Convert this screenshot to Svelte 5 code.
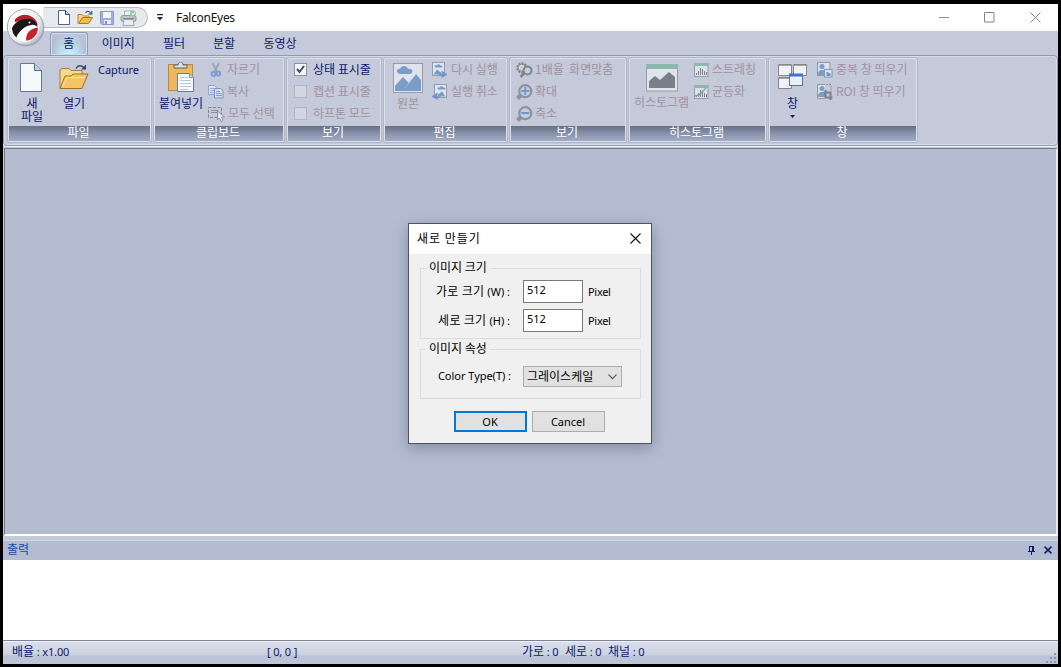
<script>
  const tabs = [
    { t: '홈', w: 37.5, on: true },
    { t: '이미지', w: 61.5 },
    { t: '필터', w: 50 },
    { t: '분할', w: 50 },
    { t: '동영상', w: 62 }
  ];
</script>

{#snippet small(kind)}
  {#if kind === 'cut'}
    <svg width="16" height="16" viewBox="0 0 16 16" fill="none"><path d="M4.500 1l4.500 9M11 1L6.500 10" stroke="#9aa3b2" stroke-width="1.800"/><circle cx="5.500" cy="12" r="2" stroke="#7e9bd0" stroke-width="1.800"/><circle cx="10.300" cy="11.500" r="2" stroke="#7e9bd0" stroke-width="1.800"/></svg>
  {:else if kind === 'copy'}
    <svg width="16" height="16" viewBox="0 0 16 16"><path d="M.500 1.500h6l2 2v7h-8z" fill="#dce4f2" stroke="#8fa3c6"/><path d="M2 4.500h4M2 6.500h4M2 8.500h4" stroke="#8eabd8"/><path d="M6.500 4.500h6l2.500 2v7.500H6.500z" fill="#d3def0" stroke="#7f95bd"/><path d="M8 7.500h4M8 9.500h6M8 11.500h6" stroke="#7e9fd4"/></svg>
  {:else if kind === 'all'}
    <svg width="17" height="16" viewBox="0 0 17 16"><path d="M.5 1.500h13v10H.5z" fill="none" stroke="#7d8492" stroke-dasharray="3 1.500"/><path d="M3 4.500h7M3 6.500h6" stroke="#8b93a1"/><path d="M9.500 5v9l2-2 1.500 3.500 2-1-1.300-3.500h2.800z" fill="#e5eaf2" stroke="#8a92a2"/></svg>
  {:else if kind === 'redo'}
    <svg width="17" height="16" viewBox="0 0 17 16"><rect x="1.500" y=".5" width="12" height="13" fill="#dfe4ee" stroke="#979da8"/><path d="M4 5.500c-1-2 0-2.500 2-2 1-2 3-1 3 0 3 0 3 2 1 2z" fill="#779bc7"/><path d="M2.500 12.500l3.500-5 4 3v2z" fill="#779bc7"/><path d="M7 11.500c1 1 2 1 3.500.5V8.500l6 4-6 3.500v-2c-2 .5-3-.5-3.500-2.500z" fill="#6f95c4"/></svg>
  {:else if kind === 'undo'}
    <svg width="17" height="16" viewBox="0 0 17 16"><rect x="3.500" y=".5" width="12" height="13" fill="#dfe4ee" stroke="#979da8"/><path d="M7 5.500c-1-2 0-2.500 2-2 1-2 3-1 3 0 3 0 3 2 1 2z" fill="#779bc7"/><path d="M14.500 12.500l-3.500-5-4 3v2z" fill="#779bc7"/><path d="M10 11.500c-1 1-2 1-3.500.5V8.500l-6 4 6 3.500v-2c2 .5 3-.5 3.500-2.500z" fill="#6f95c4"/></svg>
  {:else if kind === 'one'}
    <svg width="17" height="16" viewBox="0 0 17 16" fill="none"><circle cx="6" cy="6" r="4.700" stroke="#7f838c" stroke-width="2" stroke-dasharray="2 1"/><circle cx="5.700" cy="5.700" r="3.500" fill="#dce1eb" stroke="#7f838c"/><path d="M4 4h3v4H4z" fill="#e3cba4"/><circle cx="11.500" cy="8.500" r="4" fill="#c5ccda" stroke="#7f838c" stroke-width="2"/><path d="M8 11.500L4.500 15" stroke="#7f838c" stroke-width="2.500"/></svg>
  {:else if kind === 'in' || kind === 'out'}
    <svg width="17" height="16" viewBox="0 0 17 16"><path d="M6 10l-4.500 4.500" stroke="#8e929b" stroke-width="4"/><circle cx="9.300" cy="7.200" r="6" fill="#c3cddf" stroke="#8e929b" stroke-width="2.200"/><path d="M5.300 7h8" stroke="#7399c8" stroke-width="2"/>{#if kind === 'in'}<path d="M9.300 3v8" stroke="#7399c8" stroke-width="2"/>{/if}</svg>
  {:else if kind === 'st' || kind === 'eq'}
    <svg width="16" height="16" viewBox="0 0 16 16"><rect x="1.500" y="1.500" width="13.500" height="13" fill="#dce1ea" stroke="#979ca8"/><path d="M1 1h14.500v3H1z" fill="#8bb8ae"/><path d="M3.500 13v-2M5.500 13V9M7.500 13V6M9.500 13V7M11.500 13V9M13.500 13v-3" stroke="#7d818c"/>{#if kind === 'eq'}<path d="M2 12l4-1 7-7" stroke="#75aaa0" fill="none" stroke-width="1.400"/>{/if}</svg>
  {:else if kind === 'dup' || kind === 'roi'}
    <svg width="17" height="16" viewBox="0 0 17 16"><path d={kind === 'dup' ? 'M1.500 .5h12.500v13H1.500z' : 'M9 .5H1.500v14h7'} fill="#dce2ed" stroke="#9297a2"/><circle cx="6" cy="4.500" r="2.500" fill="#799dca"/><path d="M2 13c0-3 1-5 4-5s4 2 4 5z" fill="#799dca"/>{#if kind === 'dup'}<rect x="8.500" y="7.500" width="7.500" height="7.500" fill="#d9e3f1" stroke="#8496b1"/><path d="M10.500 10h2v1h2v3h-4z" fill="#759ac8"/>{:else}<path d="M10 .5h5v6" fill="none" stroke="#8c909a" stroke-dasharray="2 1"/><path d="M9.500 6v7.500h7M7.500 8.500h7V16" fill="none" stroke="#7b7f87" stroke-width="2"/>{/if}</svg>
  {/if}
{/snippet}

{#snippet item(kind, text)}
  <div class="item off">{@render small(kind)}<span>{text}</span></div>
{/snippet}

{#snippet check(text, on)}
  <div class="item" class:off={!on}><i class="box" class:on>{#if on}<svg width="9" height="9" viewBox="0 0 9 9"><path d="M1 4l2.500 3L8 1" fill="none" stroke="#3d4c68" stroke-width="2"/></svg>{/if}</i><span>{text}</span></div>
{/snippet}

<div class="desk">
  <div class="app">
    <header class="title">
      <div class="quick">
        <svg class="q1" width="12" height="15" viewBox="0 0 12 15"><path d="M.5.500h7l4 4v10H.5z" fill="#fbfdff" stroke="#52627f"/><path d="M7.500.500v4h4" fill="#c2d2e8" stroke="#31466d"/></svg>
        <svg class="q2" width="17" height="15" viewBox="0 0 17 15"><path d="M1 13.500v-9h4l1.500 1.500H12v3" fill="#f9d985" stroke="#b58325"/><path d="M1.500 13.500l4-6h10l-4 6z" fill="#f5bc46" stroke="#aa7620"/><path d="M8.500 3c1-2.500 4.500-2 5.500.5M14.800 1v3.200h-3.300" fill="none" stroke="#49658c" stroke-width="1.200"/></svg>
        <svg class="q3" width="14" height="14" viewBox="0 0 14 14"><path d="M.5.5h13v13H2l-1.500-1.500z" fill="#a3aee0" stroke="#8994cb"/><path d="M3 1h8v6H3z" fill="#f3f5fb"/><path d="M4 9h7v4H4z" fill="#e6eaf5"/><path d="M5 10h2v3H5z" fill="#858fbe"/></svg>
        <svg class="q4" width="17" height="16" viewBox="0 0 17 16"><path d="M4.500 6V1h8v5" fill="#eef2f6" stroke="#a8b0b9"/><rect x="1" y="5.500" width="15" height="6" rx="2" fill="#bfc5cc" stroke="#9299a3"/><path d="M3 8.500h11" stroke="#7d858f"/><path d="M4 9.500h9l1 6H3z" fill="#e7edf2" stroke="#9fa6af"/><circle cx="13" cy="3.500" r="3" fill="#9ac89d"/><path d="M11.500 3l1.500 2 2-3" fill="none" stroke="#fff"/></svg>
      </div>
      <svg class="qmore" width="6" height="7" viewBox="0 0 6 7"><path d="M0 0h6v1.300H0zM0 3h6L3 6.500z" fill="#15256f"/></svg>
      <span class="name">FalconEyes</span>
      <div class="win">
        <svg width="10" height="11" viewBox="0 0 10 11"><path d="M0 5.500h10" stroke="#8b8b8b"/></svg>
        <svg width="11" height="11" viewBox="0 0 11 11"><path d="M.5.500h9.500v9.500H.5z" fill="none" stroke="#858585"/></svg>
        <svg width="11" height="11" viewBox="0 0 11 11"><path d="M.5.500l10 10M10.500.500l-10 10" stroke="#858585"/></svg>
      </div>
    </header>
    <nav class="tabs">
      {#each tabs as tab}
        <div class="tab" class:on={tab.on} style="width:{tab.w}px">{tab.t}</div>
      {/each}
    </nav>
    <svg class="logo" width="42" height="42" viewBox="0 0 42 42">
      <defs><linearGradient id="ring" x2="1" y2="1"><stop stop-color="#fff"/><stop offset=".6" stop-color="#e8eaf0"/><stop offset="1" stop-color="#a8adba"/></linearGradient><clipPath id="disc"><circle cx="19" cy="20.800" r="13"/></clipPath></defs>
      <circle cx="20" cy="21" r="18.500" fill="#888e9f" opacity=".6"/><circle cx="19.300" cy="20" r="18" fill="url(#ring)" stroke="#a4a9b5"/><circle cx="19" cy="20.800" r="14" fill="#fff"/>
      <g clip-path="url(#disc)"><path d="M7 7h26v13l-4-5-10-2-10 2z" fill="#b71f2b"/><path d="M3 30C5 18 12 12 20 12c6 0 11 1 11.500 8-2-2-4-2.500-6-2C18 19 13 24 10 34z" fill="#1b1719"/><path d="M9 35c1-8 7-14 15-15.500l4-.5 2 2-8 15z" fill="#fff"/><path d="M20.500 35c-2-8 4-14.500 13-14.500l3 7-8 9z" fill="#c3242f"/></g><circle cx="23.500" cy="15.500" r="1.100" fill="#dde4e8"/>
    </svg>

    <div class="ribbon">
      <section style="width:143px">
        <div class="body">
          <div class="big new">
            <svg width="22" height="29" viewBox="0 0 22 29"><path d="M.5.500h14l7 7v21H.5z" fill="#f6f9fc" stroke="#65788e"/><path d="M14.500.500v7h7" fill="#bdd0e5" stroke="#54708f"/></svg>
            <span>새</span><span class="second">파일</span>
          </div>
          <div class="big open">
            <svg width="31" height="26" viewBox="0 0 31 26"><path d="M1 24V6l2-1.500h7l2 2h11v4" fill="#f8d88b" stroke="#a67d40"/><path d="M1 24.500L6 12h6l2-2h15l-6 14.500z" fill="#f4c565" stroke="#9c6e2d"/><path d="M4 22l4-8.500h18" stroke="#fae4ae" fill="none"/><path d="M17 4.500c2-3.500 6-3.500 8-.5" fill="none" stroke="#38475d" stroke-width="1.500"/><path d="M22 5.500h5v-5z" fill="#38475d"/></svg>
            <span>열기</span>
          </div>
          <span class="capture">Capture</span>
        </div>
        <footer>파일</footer>
      </section>

      <section style="width:130px">
        <div class="body">
          <div class="big paste">
            <svg width="27" height="31" viewBox="0 0 27 31"><rect x=".5" y="2.500" width="24" height="26" fill="#eeb85d" stroke="#b78a43"/><path d="M6 6V3h4c0-4 5-4 5 0h4v3z" fill="#dce3ed" stroke="#596372"/><path d="M9.500 11.500h12l4 4v14h-16z" fill="#f6f9fd" stroke="#667a96"/><path d="M21.500 11.500v4h4" fill="#cadbed" stroke="#7590b4"/><path d="M12 15.500h8M12 18.500h11M12 21.500h11M12 24.500h11M12 27.500h8" stroke="#b9c8da"/></svg>
            <span>붙여넣기</span>
          </div>
          <div class="list" style="margin-left:5px">{@render item('cut', '자르기')}{@render item('copy', '복사')}{@render item('all', '모두 선택')}</div>
        </div>
        <footer>클립보드</footer>
      </section>

      <section style="width:94px">
        <div class="body"><div class="list checks">{@render check('상태 표시줄', true)}{@render check('캡션 표시줄', false)}{@render check('하프톤 모드', false)}</div></div>
        <footer>보기</footer>
      </section>

      <section style="width:123px">
        <div class="body">
          <div class="big off orig">
            <svg width="30" height="30" viewBox="0 0 30 30"><rect x=".5" y=".5" width="29" height="29" fill="#dfe3eb" stroke="#969aa3"/><path d="M7 11c-5-1-3-6 0-5 1-4 7-4 8 0 5-1 6 4 2 5z" fill="#799dc7"/><path d="M2 28v-5l8-9 6 6 7-9 5 6v11z" fill="#799dc7"/><path d="M12 25l5-6" stroke="#a3bcda"/></svg>
            <span>원본</span>
          </div>
          <div class="list" style="margin-left:8px">{@render item('redo', '다시 실행')}{@render item('undo', '실행 취소')}</div>
        </div>
        <footer>편집</footer>
      </section>

      <section style="width:116px">
        <div class="body"><div class="list zoomlist">{@render item('one', '1배율  화면맞춤')}{@render item('in', '확대')}{@render item('out', '축소')}</div></div>
        <footer>보기</footer>
      </section>

      <section style="width:137px">
        <div class="body">
          <div class="big off hist">
            <svg width="32" height="28" viewBox="0 0 32 28"><rect x=".5" y=".5" width="31" height="26.500" fill="#dfe3ea" stroke="#969aa4"/><path d="M0 0h32v5H0z" fill="#8bb8ad"/><path d="M3 24v-7l6-5 5 4 9-8 6 5v11z" fill="#7a7f89"/></svg>
            <span>히스토그램</span>
          </div>
          <div class="list" style="margin-left:4px">{@render item('st', '스트레칭')}{@render item('eq', '균등화')}</div>
        </div>
        <footer>히스토그램</footer>
      </section>

      <section style="width:148px">
        <div class="body">
          <div class="big wins">
            <svg width="31" height="27" viewBox="0 0 31 27"><g fill="#f2f2f3" stroke="#85878c"><path d="M1.500.500h13v11h-13zM16.500.500h13v11h-13zM1.500 13.500h13v11h-13z"/></g><path d="M2 1.500h12M17 1.500h12M2 14.500h12" stroke="#a5a7ab"/><rect x="12.500" y="10.500" width="13" height="11" fill="#e7f1f6" stroke="#52779b"/><path d="M12 11h14" stroke="#3b74d2" stroke-width="3"/></svg>
            <span>창</span>
            <svg class="drop" width="5" height="3" viewBox="0 0 5 3"><path d="M0 0h5L2.500 3z" fill="#09176c"/></svg>
          </div>
          <div class="list" style="margin-left:8px">{@render item('dup', '중복 창 띄우기')}{@render item('roi', 'ROI 창 띄우기')}</div>
        </div>
        <footer>창</footer>
      </section>
    </div>

    <main class="mdi">
      <div class="dialog">
        <header><span>새로 만들기</span><svg width="11" height="11" viewBox="0 0 11 11"><path d="M.5.500l10 10M10.500.500l-10 10" stroke="#111" stroke-width="1.100"/></svg></header>
        <div class="content">
          <fieldset class="size">
            <legend>이미지 크기</legend>
            <div class="field"><label for="w">가로 크기 <em>(W) :</em></label><input id="w" value="512" /><span class="lat">Pixel</span></div>
            <div class="field"><label for="h">세로 크기 <em>(H) :</em></label><input id="h" value="512" /><span class="lat">Pixel</span></div>
          </fieldset>
          <fieldset class="attr">
            <legend>이미지 속성</legend>
            <div class="field"><span class="ctype">Color Type(T) :</span><div class="select"><span>그레이스케일</span><svg width="9" height="6" viewBox="0 0 9 6"><path d="M.5.700l4 4 4-4" fill="none" stroke="#555" stroke-width="1.200"/></svg></div></div>
          </fieldset>
          <div class="buttons"><button class="ok">OK</button><button>Cancel</button></div>
        </div>
      </div>
    </main>

    <div class="outhead"><span>출력</span>
      <svg class="pin" width="7" height="9" viewBox="0 0 7 9"><path d="M1 .5h5M1.500 0v6M4.500 0v6M5.500 0v6M0 5.500h7M3.500 6v3" stroke="#09176c"/></svg>
      <svg width="8" height="8" viewBox="0 0 8 8"><path d="M.5.700l7 6.600M7.500.700l-7 6.600" stroke="#09176c" stroke-width="1.600"/></svg>
    </div>
    <div class="output"></div>
    <div class="status">
      <span>배율 <em>: x1.00</em></span><span><em>[ 0, 0 ]</em></span><span>가로 <em>: 0</em></span><span>세로 <em>: 0</em></span><span>채널 <em>: 0</em></span>
      <svg class="grip" width="12" height="12" viewBox="0 0 12 12"><path d="M8 1h2v2H8zM4 5h2v2H4zM8 5h2v2H8zM0 9h2v2H0zM4 9h2v2H4zM8 9h2v2H8z" fill="#8b96b4"/></svg>
    </div>
  </div>
</div>

<style>
  :global(body) { background: #000; overflow: hidden; }
  .desk { width: 1061px; height: 667px; box-sizing: border-box; padding: 4px 3px 3px; background: #000; font: 12px/14px "Noto Sans CJK KR", sans-serif; color: #09176c; }
  .app { position: relative; height: 660px; display: flex; flex-direction: column; background: #c4cad9; }
  svg { display: block; flex: none; }
  em { font: 11px "Noto Sans", sans-serif; letter-spacing: -.15px; }
  .title { height: 27px; background: #fff; display: flex; align-items: center; flex: none; }
  .quick { box-sizing: border-box; margin: 0 0 0 40px; width: 105px; height: 21px; border: 1px solid #b5bac3; border-left-color: transparent; border-radius: 2px 11px 11px 2px; background: #e6eaef; display: flex; align-items: center; padding-left: 14px; }
  .q2 { margin-left: 7px; } .q3 { margin-left: 6px; } .q4 { margin-left: 6px; }
  .qmore { margin: 0 0 0 9px; }
  .name { margin-left: 13px; color: #111; font: 12px/27px "Noto Sans", sans-serif; letter-spacing: -.3px; }
  .win { margin-left: auto; display: flex; gap: 35px; padding-right: 17px; }
  .logo { position: absolute; left: 3px; top: 3px; }
  .tabs { height: 24px; flex: none; display: flex; padding: 1px 0 0 47px; box-sizing: border-box; }
  .tab { box-sizing: border-box; height: 23px; text-align: center; line-height: 21px; }
  .tab.on { border: 1px solid #8c9cb9; border-bottom: 0; border-radius: 3px 3px 0 0; background: radial-gradient(ellipse at 50% 110%, #c7fbff 0, #b9d6e8 45%, transparent 75%), linear-gradient(#bcc4d6, #a9b5cb); box-shadow: inset 0 0 0 1px #d4dceb; line-height: 20px; }
  .ribbon { height: 91px; flex: none; box-sizing: border-box; border: 1px solid #8e9baf; border-radius: 4px; box-shadow: inset 0 0 0 1px #d5dbe6, 0 1px #eef1f5; display: flex; gap: 3px; padding: 2px 4px; }
  section { box-sizing: border-box; height: 84px; flex: none; border: 1px solid #dbe0eb; border-radius: 2px; box-shadow: 0 0 0 1px #afb7c9; display: flex; flex-direction: column; }
  .body { height: 67px; flex: none; display: flex; padding-top: 1px; box-sizing: border-box; }
  footer { height: 15px; line-height: 12px; text-align: center; color: #fff; background: linear-gradient(#687086, #858fa8 45%, #a2acc7); padding-right: 2px; }
  .off { color: #a2919f; }
  .big { display: flex; flex-direction: column; align-items: center; text-align: center; line-height: 13px; flex: none; white-space: nowrap; }
  .big span { margin-top: 4px; }
  .new { width: 22px; padding: 3px 0 0 11px; } .new span { padding-left: 2px; } .big .second { margin-top: 0; }
  .open { width: 32px; margin-left: 16px; padding-top: 4px; } .big.open span { margin-top: 6px; }
  .capture { margin: 2px 0 0 8px; font: 11px/15px "Noto Sans", sans-serif; letter-spacing: -.05px; }
  .paste { width: 44px; margin-left: 4px; padding-top: 2px; } .big.paste span { margin-top: 3px; }
  .orig { width: 30px; margin-left: 8px; padding-top: 3px; } .big.orig span { margin-top: 3px; }
  .hist { width: 55px; margin-left: 4px; padding-top: 4px; } .big.hist span { margin-top: 3px; }
  .wins { width: 31px; margin-left: 7px; padding-top: 4px; } .big.wins span { margin-top: 5px; } .drop { margin-top: 6px; }
  .list { padding-top: 1px; }
  .item { height: 22px; display: flex; gap: 3px; white-space: pre; align-items: flex-start; line-height: 17px; padding-top: 1px; box-sizing: border-box; }
  .item span { margin-top: -2px; }
  .checks { padding-left: 6px; } .checks .item { gap: 6px; }
  .box { box-sizing: border-box; width: 13px; height: 13px; margin-top: 1px; border: 1px solid #adb5c4; background: #d1d6e1; padding: 1px; }
  .box.on { border-color: #8595b0; background: #f4f6fa; }
  .zoomlist { padding-left: 5px; } .zoomlist .item { gap: 2px; }
  .mdi { height: 388px; box-sizing: border-box; flex: none; border-style: solid; border-width: 1px 2px 2px 1px; border-color: #777a82 #e6e9ef #fff #777a82; background: #b4bcd2; padding: 74px 0 0 403px; margin: 2px 0 0 1px; }
  .dialog { width: 244px; height: 221px; box-sizing: border-box; border: 1px solid #51535d; background: #f0f0f0; color: #000; box-shadow: 0 4px 14px #39415a66; }
  .dialog header { background: #fff; height: 30px; box-sizing: border-box; display: flex; align-items: center; padding: 0 10px 2px 8px; justify-content: space-between; letter-spacing: 1px; }
  .content { padding: 14px 10px 0 11px; }
  fieldset { position: relative; box-sizing: border-box; border: 1px solid #dcdcdc; margin: 0; padding: 11px 0 0; width: 221px; }
  legend { position: absolute; left: 5px; top: -9px; padding: 0 3px; background: #f0f0f0; }
  .size { height: 71px; } .attr { height: 50px; margin-top: 10px; padding-top: 16px; }
  .field { display: flex; height: 24px; } .field + .field { margin-top: 5px; }
  label { width: 89px; text-align: right; line-height: 21px; margin-right: 13px; white-space: nowrap; letter-spacing: .3px; }
  label em { letter-spacing: 0; }
  input { box-sizing: border-box; width: 60px; height: 23px; border: 1px solid #7a7a7a; background: #fff; padding: 0 3px 4px; font: 11px "Noto Sans", sans-serif; letter-spacing: -.1px; }
  .lat { font: 11px/23px "Noto Sans", sans-serif; margin-left: 5px; letter-spacing: -.3px; }
  .ctype { font: 11px/20px "Noto Sans", sans-serif; width: 90px; text-align: right; margin-right: 12px; white-space: nowrap; letter-spacing: -.03px; }
  .select { box-sizing: border-box; width: 99px; height: 21px; border: 1px solid #adadad; background: #e1e1e1; display: flex; align-items: center; justify-content: space-between; padding: 0 4px 2px 3px; }
  .select svg { margin-top: 2px; }
  .buttons { display: flex; gap: 5px; margin: 12px 0 0 34px; }
  button { box-sizing: border-box; width: 73px; height: 21px; border: 1px solid #adadad; background: #e1e1e1; padding: 0 1px 0 0; font: 11px/19px "Noto Sans", sans-serif; color: #000; }
  .ok { border: 2px solid #0078d7; line-height: 17px; }
  .outhead { height: 20px; margin-top: 4px; border-top: 1px solid #d1d6e1; box-sizing: border-box; background: #b4bcd2; display: flex; align-items: center; padding: 0 6px 4px 4px; color: #154c9c; }
  .pin { margin: 3px 9px 0 auto; } .pin + svg { margin-top: 2px; }
  .output { flex: 1; background: #fff; }
  .status { position: relative; height: 24px; box-sizing: border-box; border-top: 1px solid #7a819a; box-shadow: inset 0 1px #eef1f6; background: linear-gradient(#dbe0eb, #cbd1e0 60%, #bac3d6 65%, #bdc6d9); display: grid; grid-template-columns: 255px 255px 43px 43px 1fr; padding-left: 9px; line-height: 20px; white-space: nowrap; }
  .grip { position: absolute; right: 0; bottom: 0; }
</style>
